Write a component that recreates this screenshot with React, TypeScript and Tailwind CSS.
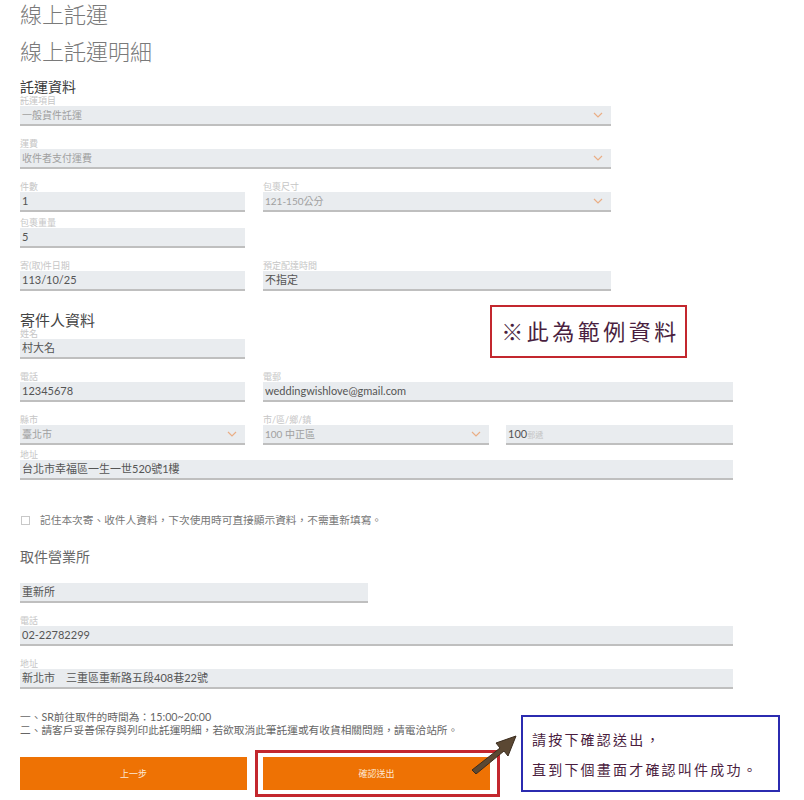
import React from 'react';

const Chevron = () => (
  <svg width="10" height="6" viewBox="0 0 10 6" className="shrink-0">
    <polyline points="1,1 5,5 9,1" fill="none" stroke="#eaae86" strokeWidth="1.2" />
  </svg>
);

type FieldProps = {
  label?: string;
  value: React.ReactNode;
  select?: boolean;
  dim?: boolean;
  className?: string;
};

function Field({ label, value, select, dim, className }: FieldProps) {
  return (
    <div className={`flex flex-col ${className ?? ''}`}>
      {label !== undefined && (
        <div className="h-[12px] text-[9px] leading-[13px] text-[#c6c6c6]">{label}</div>
      )}
      <div className="flex h-[20px] items-center justify-between border-b-2 border-[#bfbfbf] bg-[#e9ecef] pl-[2px] pr-[8px]">
        <span className={dim ? 'text-[10px] text-[#a0a0a0]' : 'text-[11px] text-[#555]'}>{value}</span>
        {select && <Chevron />}
      </div>
    </div>
  );
}

export default function App() {
  return (
    <div className="relative min-h-[800px] overflow-hidden bg-white px-[20px] font-['Lato','Noto_Sans_CJK_TC',sans-serif]">
      {/* Page titles */}
      <h1 className="text-[22px] font-light leading-[30px] text-[#7a7a7a]">線上託運</h1>
      <h2 className="mt-[7px] text-[22px] font-light leading-[30px] text-[#7a7a7a]">線上託運明細</h2>

      {/* 託運資料 */}
      <h3 className="mt-[13px] text-[14px] leading-[14px] text-[#3a3a3a]">託運資料</h3>
      <Field label="託運項目" value="一般貨件託運" select dim className="w-[591px]" />
      <Field label="運費" value="收件者支付運費" select dim className="mt-[11px] w-[591px]" />
      <div className="mt-[11px] flex gap-[18px]">
        <Field label="件數" value="1" className="w-[225px]" />
        <Field label="包裹尺寸" value="121-150公分" select dim className="w-[348px]" />
      </div>
      <Field label="包裹重量" value="5" className="mt-[4px] w-[225px]" />
      <div className="mt-[11px] flex gap-[18px]">
        <Field label="寄(取)件日期" value="113/10/25" className="w-[225px]" />
        <Field label="預定配達時間" value="不指定" className="w-[348px]" />
      </div>

      {/* 寄件人資料 */}
      <h3 className="mt-[22px] text-[15px] leading-[14px] text-[#444]">寄件人資料</h3>
      <Field label="姓名" value="村大名" className="w-[225px]" />
      <div className="mt-[11px] flex gap-[18px]">
        <Field label="電話" value="12345678" className="w-[225px]" />
        <Field label="電郵" value="weddingwishlove@gmail.com" className="w-[470px]" />
      </div>
      <div className="mt-[11px] flex gap-[18px]">
        <Field label="縣市" value="臺北市" select dim className="w-[225px]" />
        <Field label="市/區/鄉/鎮" value="100 中正區" select dim className="w-[226px]" />
        <Field
          label=""
          value={
            <span className="flex items-baseline">
              <span className="text-[11px] text-[#555]">100</span>
              <span className="text-[8px] text-[#c4c4c4]">郵遞</span>
            </span>
          }
          className="-ml-px w-[227px]"
        />
      </div>
      <Field label="地址" value="台北市幸福區一生一世520號1樓" className="mt-[3px] w-[713px]" />

      {/* remember */}
      <div className="mt-[33px] flex h-[14px] items-center gap-[10px]">
        <div className="ml-px h-[9px] w-[9px] border border-[#c8c8c8]" />
        <span className="text-[10.7px] text-[#777]">記住本次寄、收件人資料，下次使用時可直接顯示資料，不需重新填寫。</span>
      </div>

      {/* 取件營業所 */}
      <h3 className="mt-[23px] text-[14px] leading-[14px] text-[#666]">取件營業所</h3>
      <Field value="重新所" className="mt-[19px] w-[348px]" />
      <Field label="電話" value="02-22782299" className="mt-[11px] w-[713px]" />
      <Field label="地址" value="新北市　三重區重新路五段408巷22號" className="mt-[11px] w-[713px]" />

      {/* notes */}
      <div className="mt-[21px] text-[10.7px] leading-[13px] text-[#666]">
        <p>一、SR前往取件的時間為：15:00~20:00</p>
        <p>二、請客戶妥善保存與列印此託運明細，若欲取消此筆託運或有收貨相關問題，請電洽站所。</p>
      </div>

      {/* buttons */}
      <div className="mt-[21px] flex gap-[16px]">
        <button className="h-[33px] w-[227px] bg-[#ee7204] text-[9px] text-[#fde9d6]">上一步</button>
        <div className="relative">
          <button className="h-[33px] w-[227px] bg-[#ee7204] text-[9px] text-[#fde9d6]">確認送出</button>
          <div className="pointer-events-none absolute -bottom-[7px] -left-[8px] -right-[10px] -top-[7px] border-[3px] border-[#c3272e]" />
        </div>
      </div>

      {/* annotation: sample data */}
      <div className="absolute left-[490px] top-[305px] flex h-[53px] w-[197px] items-center justify-center border-2 border-[#c3272e] pl-[4px]">
        <span className="text-[22px] tracking-[3.5px] text-[#4a1f40]">※此為範例資料</span>
      </div>

      {/* annotation: arrow */}
      <svg className="absolute left-[468px] top-[728px]" width="54" height="46" viewBox="0 0 54 46">
        <path d="M4 42 L32 20 L28 15 L48 8 L40 28 L36 23 L8 46 Z" fill="#5b4833" stroke="#3a2c1e" strokeWidth="1" />
      </svg>

      {/* annotation: instructions */}
      <div className="absolute left-[521px] top-[715px] h-[77px] w-[259px] border-2 border-[#2b2bb0] pl-[9px] pt-[8px]">
        <p className="text-[14px] leading-[30px] tracking-[2.2px] text-[#4b1e3f]">請按下確認送出，</p>
        <p className="text-[14px] leading-[30px] tracking-[2.2px] text-[#4b1e3f]">直到下個畫面才確認叫件成功。</p>
      </div>
    </div>
  );
}
